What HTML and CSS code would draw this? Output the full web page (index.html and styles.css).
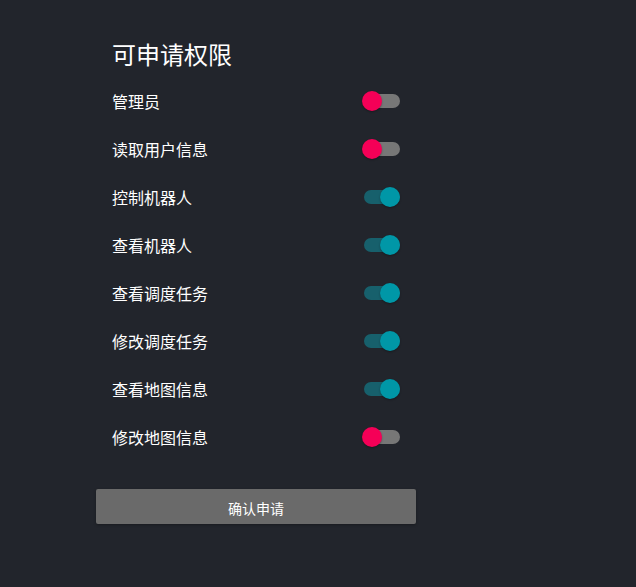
FILE: index.html
```html
<!DOCTYPE html>
<html lang="zh">
<head>
<meta charset="utf-8">
<link rel="stylesheet" href="styles.css">
</head>
<body>
<div class="panel">
  <div class="content">
    <h1 class="title">可申请权限</h1>
    <div class="row"><span class="label">管理员</span><span class="switch off"><span class="track"></span><span class="knob"></span></span></div>
    <div class="row"><span class="label">读取用户信息</span><span class="switch off"><span class="track"></span><span class="knob"></span></span></div>
    <div class="row"><span class="label">控制机器人</span><span class="switch on"><span class="track"></span><span class="knob"></span></span></div>
    <div class="row"><span class="label">查看机器人</span><span class="switch on"><span class="track"></span><span class="knob"></span></span></div>
    <div class="row"><span class="label">查看调度任务</span><span class="switch on"><span class="track"></span><span class="knob"></span></span></div>
    <div class="row"><span class="label">修改调度任务</span><span class="switch on"><span class="track"></span><span class="knob"></span></span></div>
    <div class="row"><span class="label">查看地图信息</span><span class="switch on"><span class="track"></span><span class="knob"></span></span></div>
    <div class="row"><span class="label">修改地图信息</span><span class="switch off"><span class="track"></span><span class="knob"></span></span></div>
  </div>
  <button class="submit">确认申请</button>
</div>
</body>
</html>
```
FILE: styles.css
```css
html, body {
  margin: 0;
  padding: 0;
  background: #22252c;
  height: 100%;
}
body {
  font-family: "Noto Sans CJK SC", "Noto Sans", sans-serif;
  color: #ffffff;
}
.panel {
  width: 320px;
  margin-left: 96px;
  padding-top: 36px;
}
.content {
  padding: 0 16px;
}
.title {
  margin: 0 0 5px 0;
  font-size: 24px;
  font-weight: 400;
  line-height: 36px;
}
.row {
  height: 48px;
  display: flex;
  align-items: center;
  justify-content: space-between;
}
.label {
  font-size: 16px;
  line-height: 20px;
}
.switch {
  position: relative;
  width: 38px;
  height: 20px;
}
.track {
  position: absolute;
  left: 2px;
  right: 0;
  top: 3px;
  height: 14px;
  border-radius: 7px;
  background: #777777;
}
.knob {
  position: absolute;
  top: 0;
  width: 20px;
  height: 20px;
  border-radius: 50%;
  background: #f50057;
  box-shadow: 0 1px 2px rgba(0,0,0,0.3);
}
.switch.off .knob { left: 0; }
.switch.on .knob { right: 0; background: #0097a7; }
.switch.on .track { background: #17606c; }
.submit {
  display: block;
  margin-top: 28px;
  width: 320px;
  height: 35px;
  border: none;
  border-radius: 2px;
  background: #6a6a6a;
  color: #ffffff;
  font-family: "Noto Sans CJK SC", "Noto Sans", sans-serif;
  font-size: 14px;
  padding: 2px 0 0 0;
  box-shadow: 0 1px 3px rgba(0,0,0,0.3);
}
```
